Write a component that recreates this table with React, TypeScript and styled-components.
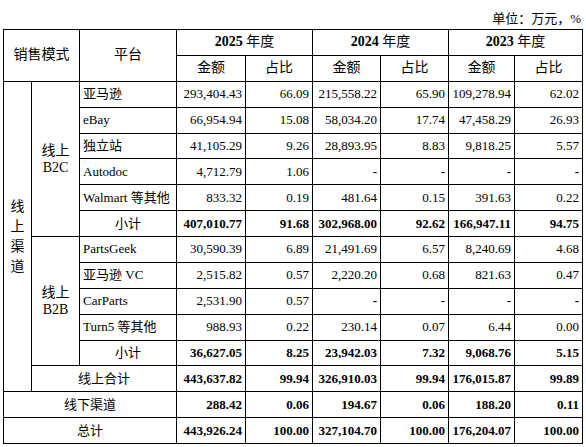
import React from 'react';
import styled, {createGlobalStyle} from 'styled-components';

const GlobalStyle = createGlobalStyle`
    body {
        margin: 0;
        background: #fff;
        font-family: 'Liberation Serif', 'Noto Sans CJK SC', serif;
        color: #000;
    }
`;

const Wrapper = styled.div`
    padding: 9px 4px 0 3px;
    width: 579px;
`;

const Unit = styled.div`
    height: 20px;
    line-height: 20px;
    text-align: right;
    font-size: 13px;
    padding-right: 1px;
`;

const Table = styled.table`
    border-collapse: collapse;
    table-layout: fixed;
    width: 579px;
    font-size: 13px;
`;

const Row = styled.tr`
    height: 25.875px;
`;

const Cell = styled.td<{ $align?: 'left' | 'right' | 'center'; $bold?: boolean }>`
    border: 1px solid #000;
    padding: 0 3px;
    text-align: ${p => p.$align || 'center'};
    font-weight: ${p => (p.$bold ? 700 : 400)};
    white-space: nowrap;
    vertical-align: middle;
    line-height: 16px;
`;

const HeadCell = styled(Cell)`
    font-size: 14px;
`;

const Year = styled.b`
    font-weight: 700;
`;

const Stack = styled.div`
    display: flex;
    flex-direction: column;
    align-items: center;
    font-size: 14px;
    line-height: 20px;
`;

const Group = styled.div`
    font-size: 14px;
    line-height: 17px;
`;

type Nums = string[];

interface PlatformRow {
    name: string;
    nums: Nums;
}

const b2c: PlatformRow[] = [
    {name: '亚马逊', nums: ['293,404.43', '66.09', '215,558.22', '65.90', '109,278.94', '62.02']},
    {name: 'eBay', nums: ['66,954.94', '15.08', '58,034.20', '17.74', '47,458.29', '26.93']},
    {name: '独立站', nums: ['41,105.29', '9.26', '28,893.95', '8.83', '9,818.25', '5.57']},
    {name: 'Autodoc', nums: ['4,712.79', '1.06', '-', '-', '-', '-']},
    {name: 'Walmart 等其他', nums: ['833.32', '0.19', '481.64', '0.15', '391.63', '0.22']},
];

const b2b: PlatformRow[] = [
    {name: 'PartsGeek', nums: ['30,590.39', '6.89', '21,491.69', '6.57', '8,240.69', '4.68']},
    {name: '亚马逊 VC', nums: ['2,515.82', '0.57', '2,220.20', '0.68', '821.63', '0.47']},
    {name: 'CarParts', nums: ['2,531.90', '0.57', '-', '-', '-', '-']},
    {name: 'Turn5 等其他', nums: ['988.93', '0.22', '230.14', '0.07', '6.44', '0.00']},
];

const b2cTotal = ['407,010.77', '91.68', '302,968.00', '92.62', '166,947.11', '94.75'];
const b2bTotal = ['36,627.05', '8.25', '23,942.03', '7.32', '9,068.76', '5.15'];
const onlineTotal = ['443,637.82', '99.94', '326,910.03', '99.94', '176,015.87', '99.89'];
const offline = ['288.42', '0.06', '194.67', '0.06', '188.20', '0.11'];
const total = ['443,926.24', '100.00', '327,104.70', '100.00', '176,204.07', '100.00'];

const NumCells = ({nums, bold}: { nums: Nums; bold?: boolean }) => (
    <>
        {nums.map((n, i) => (
            <Cell key={i} $align="right" $bold={bold || n === '-'}>{n}</Cell>
        ))}
    </>
);

export default function App() {
    return (
        <Wrapper>
            <GlobalStyle/>
            <Unit>单位：万元，%</Unit>
            <Table>
                <colgroup>
                    <col style={{width: 28}}/>
                    <col style={{width: 48}}/>
                    <col style={{width: 97}}/>
                    <col style={{width: 69}}/>
                    <col style={{width: 67}}/>
                    <col style={{width: 68}}/>
                    <col style={{width: 68}}/>
                    <col style={{width: 66}}/>
                    <col style={{width: 68}}/>
                </colgroup>
                <tbody>
                    <Row>
                        <HeadCell colSpan={2} rowSpan={2}>销售模式</HeadCell>
                        <HeadCell rowSpan={2}>平台</HeadCell>
                        <HeadCell colSpan={2}><Year>2025</Year> 年度</HeadCell>
                        <HeadCell colSpan={2}><Year>2024</Year> 年度</HeadCell>
                        <HeadCell colSpan={2}><Year>2023</Year> 年度</HeadCell>
                    </Row>
                    <Row>
                        <HeadCell>金额</HeadCell>
                        <HeadCell>占比</HeadCell>
                        <HeadCell>金额</HeadCell>
                        <HeadCell>占比</HeadCell>
                        <HeadCell>金额</HeadCell>
                        <HeadCell>占比</HeadCell>
                    </Row>
                    {b2c.map((r, i) => (
                        <Row key={r.name}>
                            {i === 0 && (
                                <Cell rowSpan={12} style={{padding: 0}}>
                                    <Stack>
                                        <span>线</span>
                                        <span>上</span>
                                        <span>渠</span>
                                        <span>道</span>
                                    </Stack>
                                </Cell>
                            )}
                            {i === 0 && (
                                <Cell rowSpan={6}>
                                    <Group>线上<br/>B2C</Group>
                                </Cell>
                            )}
                            <Cell $align="left">{r.name}</Cell>
                            <NumCells nums={r.nums}/>
                        </Row>
                    ))}
                    <Row>
                        <Cell>小计</Cell>
                        <NumCells nums={b2cTotal} bold/>
                    </Row>
                    {b2b.map((r, i) => (
                        <Row key={r.name}>
                            {i === 0 && (
                                <Cell rowSpan={5}>
                                    <Group>线上<br/>B2B</Group>
                                </Cell>
                            )}
                            <Cell $align="left">{r.name}</Cell>
                            <NumCells nums={r.nums}/>
                        </Row>
                    ))}
                    <Row>
                        <Cell>小计</Cell>
                        <NumCells nums={b2bTotal} bold/>
                    </Row>
                    <Row>
                        <Cell colSpan={2}>线上合计</Cell>
                        <NumCells nums={onlineTotal} bold/>
                    </Row>
                    <Row>
                        <Cell colSpan={3}>线下渠道</Cell>
                        <NumCells nums={offline} bold/>
                    </Row>
                    <Row>
                        <Cell colSpan={3}>总计</Cell>
                        <NumCells nums={total} bold/>
                    </Row>
                </tbody>
            </Table>
        </Wrapper>
    );
}
